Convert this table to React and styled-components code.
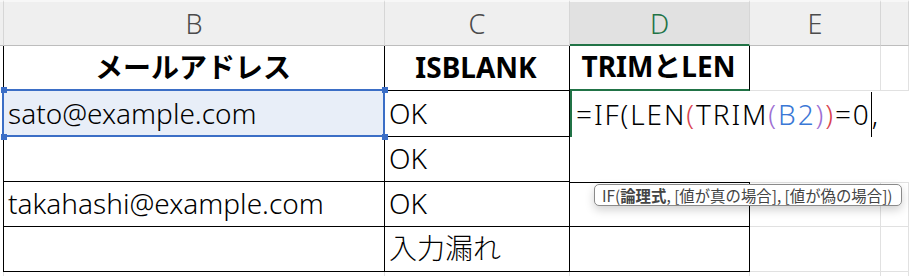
import React from "react";
import styled, { createGlobalStyle } from "styled-components";

const FONT = `"Noto Sans", "Noto Sans CJK JP", sans-serif`;
const GREEN = "#217346";
const PICK = "#3b6ec6";

const GlobalStyle = createGlobalStyle`
  html, body {
    margin: 0;
    padding: 0;
    background: #fff;
  }
  body {
    font-family: ${FONT};
  }
`;

const lineColor = {
  ink: "#000",
  grid: "#e1e1e1",
};

const Sheet = styled.div`
  position: relative;
  display: grid;
  grid-template-columns: 4px 381px 185px 180px 131px 1fr;
  grid-template-rows: 46px 45px 46px 45px 45px 45px 1fr;
  width: 909px;
  height: 276px;
  overflow: hidden;
  background: #fff;
  font-family: ${FONT};
  color: #000;
`;

const ColHead = styled.div`
  box-sizing: border-box;
  display: flex;
  align-items: center;
  justify-content: center;
  border-top: 2px solid #f7f7f7;
  border-right: 1px solid #d6d6d6;
  border-bottom: ${(p) => (p.$active ? `2px solid ${GREEN}` : "1px solid #bdbdbd")};
  background: ${(p) => (p.$active ? "#e1e1e1" : "#efefef")};
  color: ${(p) => (p.$active ? GREEN : "#4b4b4b")};
  font-size: 27px;
  font-weight: 300;
`;

const Stub = styled.div`
  border-right: 1px solid ${(p) => lineColor[p.$line]};
`;

const Cell = styled.div`
  box-sizing: border-box;
  display: flex;
  align-items: flex-end;
  justify-content: ${(p) => (p.$center ? "center" : "flex-start")};
  padding: 0 6px 6px 4px;
  border-right: 1px solid ${(p) => lineColor[p.$line]};
  border-bottom: ${(p) =>
    p.$activeBelow ? `2px solid ${GREEN}` : `1px solid ${lineColor[p.$line]}`};
  border-top: ${(p) => (p.$top ? `1px solid ${lineColor[p.$top]}` : "none")};
  font-size: 28px;
  line-height: 34px;
  font-weight: ${(p) => (p.$bold ? 700 : 300)};
  white-space: nowrap;
`;

const PickedCell = styled(Cell)`
  position: relative;
  background: #e8eef8;
  &::after {
    content: "";
    position: absolute;
    inset: -2px -1px -1px -2px;
    border: 2px solid ${PICK};
    pointer-events: none;
  }
`;

const Handle = styled.span`
  position: absolute;
  width: 6px;
  height: 6px;
  background: ${PICK};
  z-index: 1;
  ${(p) => (p.$top ? "top: -4px;" : "bottom: -4px;")}
  ${(p) => (p.$left ? "left: -3px;" : "right: -4px;")}
`;

const EditBox = styled.div`
  grid-column: 4 / -1;
  grid-row: 3 / 5;
  background: #fff;
  position: relative;
  z-index: 1;
`;

const FormulaLine = styled.div`
  box-sizing: border-box;
  width: 180px;
  height: 46px;
  border-left: 2px solid ${GREEN};
  display: flex;
  align-items: flex-end;
  padding-left: 4px;
  font-size: 28px;
  font-weight: 300;
  line-height: 34px;
  letter-spacing: 1.9px;
  white-space: nowrap;
`;

const FormulaText = styled.span`
  padding-bottom: 6px;
`;

const Tok = styled.span`
  color: ${(p) => p.$c || "#000"};
`;

const Caret = styled.span`
  align-self: stretch;
  width: 0;
  margin-top: 1px;
  border-left: 1.5px solid #000;
`;

const Tip = styled.div`
  position: absolute;
  left: 594px;
  top: 184px;
  z-index: 2;
  box-sizing: border-box;
  width: 308px;
  height: 22px;
  padding: 0 7px;
  display: flex;
  align-items: center;
  background: #fff;
  border: 1px solid #8a8a8a;
  border-radius: 5px;
  box-shadow: 0 4px 10px rgba(0, 0, 0, 0.18);
  font-family: "Noto Sans CJK JP", sans-serif;
  font-size: 15.4px;
  color: #444;
  white-space: nowrap;
`;

const columns = ["B", "C", "D", "E", ""];

export default function App() {
  return (
    <>
      <GlobalStyle />
      <Sheet>
        <ColHead />
        {columns.map((c) => (
          <ColHead key={c || "F"} $active={c === "D"}>
            {c}
          </ColHead>
        ))}

        {/* row 1: table heading */}
        <Stub $line="ink" />
        <Cell $line="ink" $center $bold>メールアドレス</Cell>
        <Cell $line="ink" $center $bold>ISBLANK</Cell>
        <Cell $line="ink" $center $bold $activeBelow>TRIMとLEN</Cell>
        <Cell $line="grid" />
        <Cell $line="grid" />

        {/* row 2: referenced cell + in-cell editor */}
        <Stub $line="ink" />
        <PickedCell $line="ink">
          sato@example.com
          <Handle $top $left />
          <Handle $top />
          <Handle $left />
          <Handle />
        </PickedCell>
        <Cell $line="ink">OK</Cell>
        <EditBox>
          <FormulaLine>
            <FormulaText>
              <Tok>=IF(LEN</Tok>
              <Tok $c="#d9434e">(</Tok>
              <Tok>TRIM</Tok>
              <Tok $c="#9d6fd3">(</Tok>
              <Tok $c="#3a78d6">B2</Tok>
              <Tok $c="#9d6fd3">)</Tok>
              <Tok $c="#d9434e">)</Tok>
              <Tok>=0</Tok>
            </FormulaText>
            <Caret />
            <FormulaText>,</FormulaText>
          </FormulaLine>
        </EditBox>

        {/* row 3 */}
        <Stub $line="ink" />
        <Cell $line="ink" />
        <Cell $line="ink">OK</Cell>

        {/* row 4 */}
        <Stub $line="ink" />
        <Cell $line="ink">takahashi@example.com</Cell>
        <Cell $line="ink">OK</Cell>
        <Cell $line="ink" $top="ink" />
        <Cell $line="grid" $top="grid" />
        <Cell $line="grid" $top="grid" />

        {/* row 5 */}
        <Stub $line="ink" />
        <Cell $line="ink" />
        <Cell $line="ink">入力漏れ</Cell>
        <Cell $line="ink" />
        <Cell $line="grid" />
        <Cell $line="grid" />

        {/* row 6, cut off */}
        <Stub $line="grid" />
        <Cell $line="grid" />
        <Cell $line="grid" />
        <Cell $line="grid" />
        <Cell $line="grid" />
        <Cell $line="grid" />

        <Tip>
          IF(<b>論理式</b>, [値が真の場合], [値が偽の場合])
        </Tip>
      </Sheet>
    </>
  );
}
